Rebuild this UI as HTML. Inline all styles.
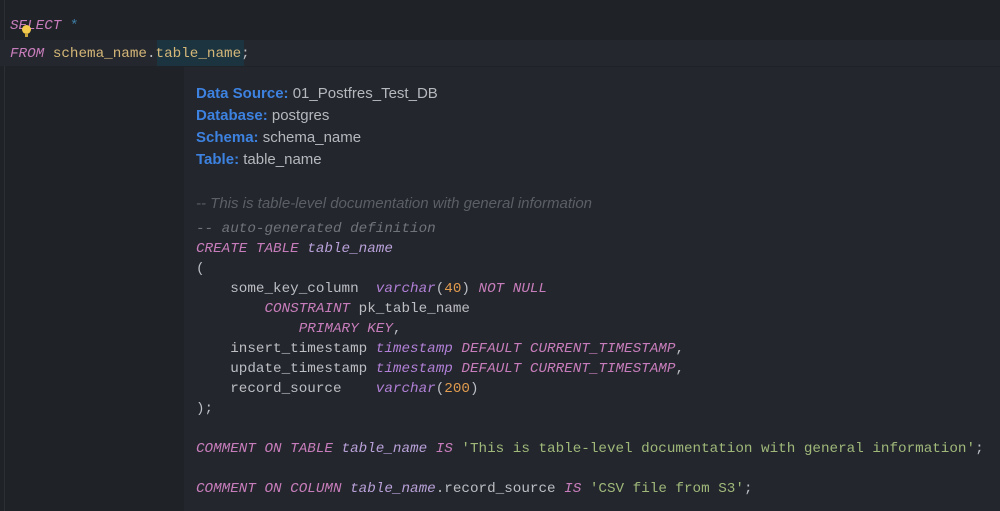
<!DOCTYPE html>
<html><head><meta charset="utf-8"><style>
*{margin:0;padding:0;box-sizing:border-box}
html,body{width:1000px;height:511px;overflow:hidden;background:#1f2227}
.m{font-family:"Liberation Mono",monospace;font-size:14.28px;white-space:pre;position:absolute;line-height:20px;color:#bcbec4}
.k{color:#c77dbb;font-style:italic}
.kb{color:#b07fd6;font-style:italic}
.id{color:#d5b778}
.n{color:#e09b4f}
.s{color:#9fb87a}
.c{color:#6f737a;font-style:italic}
.t{color:#b8a0d8;font-style:italic}
#band{position:absolute;left:0;top:40px;width:1000px;height:26px;background:#24272e}
#sel{position:absolute;left:157px;top:40px;width:87px;height:26px;background:#1c3440}
#pop{position:absolute;left:184px;top:67px;width:816px;height:444px;background:#23262c}
#gut{position:absolute;left:4px;top:0;width:1px;height:511px;background:#2c2f35}
.h{position:absolute;left:196px;font-family:"Liberation Sans",sans-serif;font-size:15px;color:#b5b8bd;line-height:22px}
.h b{color:#3d82e0}
.bulb{position:absolute;left:22px;top:25px;width:9px;height:9px;border-radius:50%;background:#f2c94c}
.bulb:after{content:"";position:absolute;left:3px;top:8px;width:3px;height:4px;background:#c9a43a}
</style></head><body>
<div id="gut"></div>
<div id="band"></div>
<div id="sel"></div>
<div id="pop"></div>
<div class="m" style="left:10px;top:16px"><span class="k">SELECT</span> <span style="color:#3e7fa8">*</span></div>
<div class="bulb"></div>
<div class="m" style="left:10px;top:44px"><span class="k">FROM</span> <span class="id">schema_name</span>.<span class="id">table_name</span>;</div>
<div class="h" style="top:83px"><b>Data Source:</b> 01_Postfres_Test_DB</div>
<div class="h" style="top:105px"><b>Database:</b> postgres</div>
<div class="h" style="top:127px"><b>Schema:</b> schema_name</div>
<div class="h" style="top:149px"><b>Table:</b> table_name</div>
<div class="h" style="top:193px;color:#5b5f66;font-style:italic;font-size:15px">-- This is table-level documentation with general information</div>
<div class="m" style="left:196px;top:219px"><span class="c">-- auto-generated definition</span>
<span class="k">CREATE TABLE</span> <span class="t">table_name</span>
(
    some_key_column  <span class="kb">varchar</span>(<span class="n">40</span>) <span class="k">NOT NULL</span>
        <span class="k">CONSTRAINT</span> pk_table_name
            <span class="k">PRIMARY KEY</span>,
    insert_timestamp <span class="kb">timestamp</span> <span class="k">DEFAULT CURRENT_TIMESTAMP</span>,
    update_timestamp <span class="kb">timestamp</span> <span class="k">DEFAULT CURRENT_TIMESTAMP</span>,
    record_source    <span class="kb">varchar</span>(<span class="n">200</span>)
);

<span class="k">COMMENT ON TABLE</span> <span class="t">table_name</span> <span class="k">IS</span> <span class="s">'This is table-level documentation with general information'</span>;

<span class="k">COMMENT ON COLUMN</span> <span class="t">table_name</span>.record_source <span class="k">IS</span> <span class="s">'CSV file from S3'</span>;</div>
</body></html>
